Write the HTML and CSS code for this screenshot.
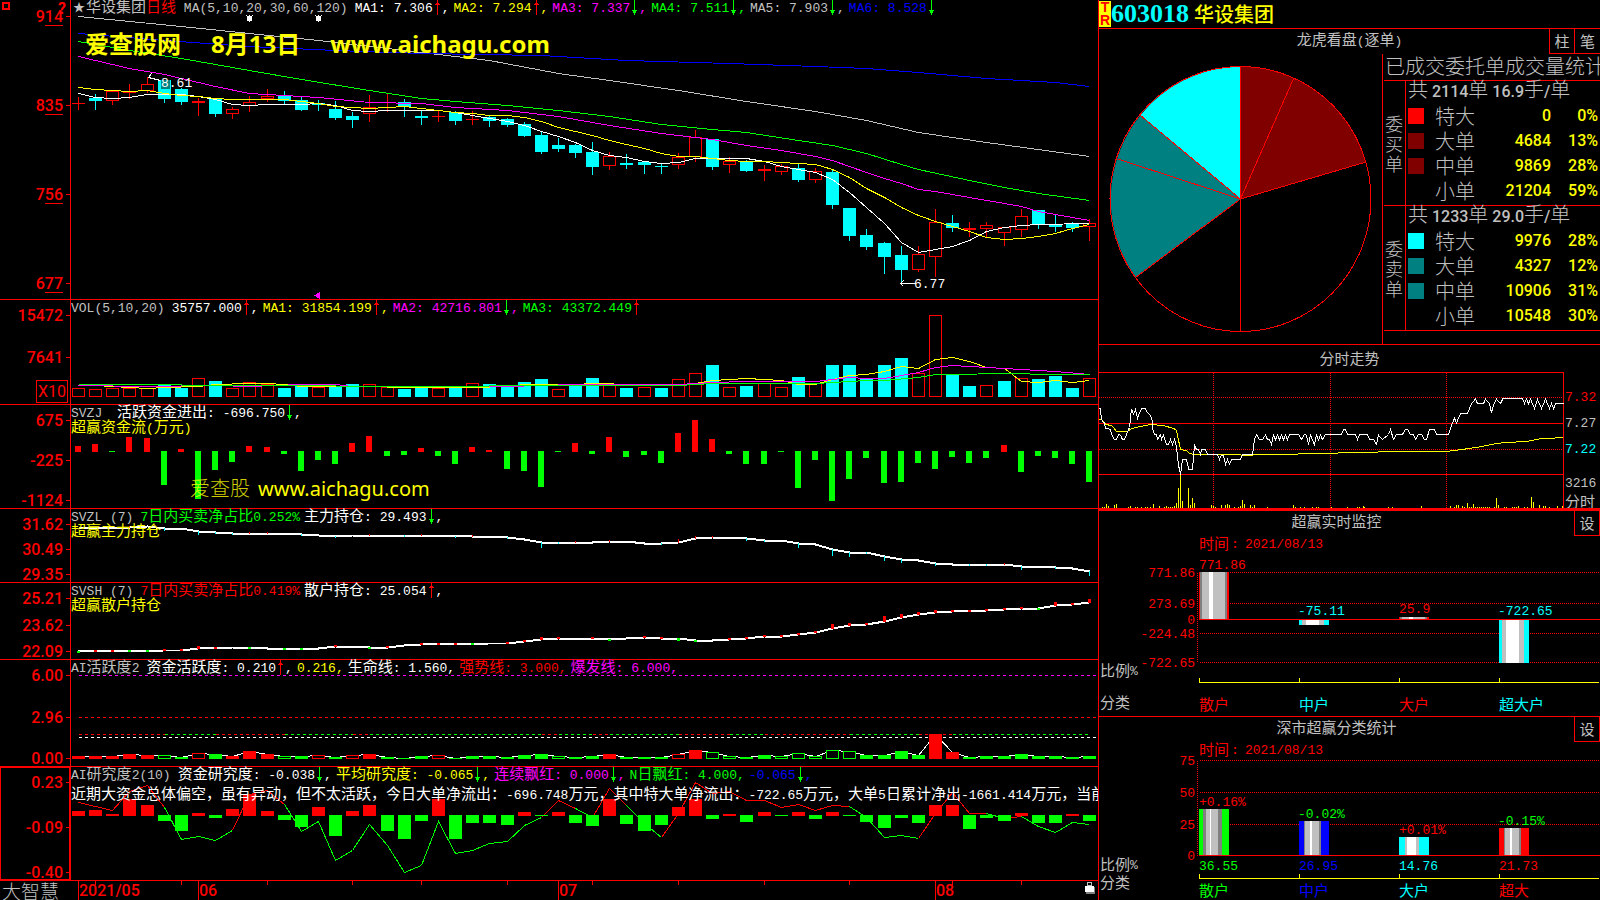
FILE: index.html
```html
<!DOCTYPE html>
<html lang="zh-CN">
<head>
<meta charset="utf-8">
<title>603018 华设集团</title>
<link rel="stylesheet" href="styles.css">
</head>
<body>

<svg class="defs" aria-hidden="true">
  <symbol id="up" viewBox="0 0 7 15"><path d="M3 0h1v15h-1zM2 3h3v1h-3zM1 4h5v1h-5z" fill="#f00"/></symbol>
  <symbol id="down" viewBox="0 0 7 15"><path d="M3 0h1v15h-1zM1 10h5v1h-5zM2 11h3v2h-3z" fill="#0f0"/></symbol>
</svg>

<main class="charts">

  <section class="panel">
    <div class="axis price">
      <svg class="pinmark" width="8" height="8"><path d="M1 1h6v6h-6z" fill="none" stroke="#f00" stroke-width="2"/></svg>
      <b class="ghost">?</b>
      <span>9<u>14</u></span><span>8<u>35</u></span><span>7<u>56</u></span><span>6<u>77</u></span>
    </div>
    <div class="plot">
      <svg class="draw" id="price"></svg>
      <div class="legend silver">
        <span class="name"><span class="zh star">★</span><span class="zh">华设集团</span><span class="zh red">日线</span> MA(5,10,20,30,60,120)</span>
        <span class="white">MA1: 7.306<svg class="arrow"><use href="#up"/></svg>,</span>
        <span class="yellow">MA2: 7.294<svg class="arrow"><use href="#up"/></svg>,</span>
        <span class="magenta">MA3: 7.337<svg class="arrow"><use href="#down"/></svg>,</span>
        <span class="green">MA4: 7.511<svg class="arrow"><use href="#down"/></svg>,</span>
        <span class="silver">MA5: 7.903<svg class="arrow"><use href="#down"/></svg>,</span>
        <span class="blue">MA6: 8.528<svg class="arrow"><use href="#down"/></svg></span>
      </div>
      <div class="watermark big"><span>爱查股网</span><span>8月13日</span><span>www.aichagu.com</span></div>
    </div>
  </section>

  <section class="panel">
    <div class="axis"><span>15472</span><span>7641</span><span class="times">X10</span></div>
    <div class="plot">
      <svg class="draw" id="vol"></svg>
      <div class="legend silver">
        <span class="name">VOL(5,10,20)</span>
        <span class="white">35757.000<svg class="arrow"><use href="#up"/></svg>,</span>
        <span class="yellow">MA1: 31854.199<svg class="arrow"><use href="#up"/></svg>,</span>
        <span class="magenta">MA2: 42716.801<svg class="arrow"><use href="#down"/></svg>,</span>
        <span class="green">MA3: 43372.449<svg class="arrow"><use href="#up"/></svg></span>
      </div>
    </div>
  </section>

  <section class="panel">
    <div class="axis"><span>675</span><span>-225</span><span>-1124</span></div>
    <div class="plot">
      <svg class="draw" id="flow"></svg>
      <div class="legend silver">
        <span class="name">SVZJ </span>
        <span class="white"><span class="zh">活跃资金进出</span>: -696.750<svg class="arrow"><use href="#down"/></svg>,</span>
      </div>
      <div class="sub"><span class="zh">超赢资金流</span>(<span class="zh">万元</span>)</div>
      <div class="watermark small"><span class="thin">爱查股</span><span>www.aichagu.com</span></div>
    </div>
  </section>

  <section class="panel">
    <div class="axis"><span>31.62</span><span>30.49</span><span>29.35</span></div>
    <div class="plot">
      <svg class="draw" id="main-hold"></svg>
      <div class="legend silver">
        <span class="name">SVZL (7)</span>
        <span class="green">7<span class="zh">日内买卖净占比</span>0.252%</span>
        <span class="white"><span class="zh">主力持仓</span>: 29.493<svg class="arrow"><use href="#down"/></svg>,</span>
      </div>
      <div class="sub"><span class="zh">超赢主力持仓</span></div>
    </div>
  </section>

  <section class="panel">
    <div class="axis"><span>25.21</span><span>23.62</span><span>22.09</span></div>
    <div class="plot">
      <svg class="draw" id="retail-hold"></svg>
      <div class="legend silver">
        <span class="name">SVSH (7)</span>
        <span class="red">7<span class="zh">日内买卖净占比</span>0.419%</span>
        <span class="white"><span class="zh">散户持仓</span>: 25.054<svg class="arrow"><use href="#up"/></svg>,</span>
      </div>
      <div class="sub"><span class="zh">超赢散户持仓</span></div>
    </div>
  </section>

  <section class="panel">
    <div class="axis"><span>6.00</span><span>2.96</span><span>0.00</span></div>
    <div class="plot">
      <svg class="draw" id="active"></svg>
      <div class="legend silver">
        <span class="name">AI<span class="zh">活跃度</span>2</span>
        <span class="white"><span class="zh">资金活跃度</span>: 0.210<svg class="arrow"><use href="#up"/></svg>,</span>
        <span class="yellow">0.216,</span>
        <span class="white"><span class="zh">生命线</span>: 1.560,</span>
        <span class="red"><span class="zh">强势线</span>: 3.000,</span>
        <span class="magenta"><span class="zh">爆发线</span>: 6.000,</span>
      </div>
    </div>
  </section>

  <section class="panel">
    <div class="axis current"><span>0.23</span><span>-0.09</span><span>-0.40</span></div>
    <div class="plot">
      <svg class="draw" id="study"></svg>
      <div class="legend silver">
        <span class="name">AI<span class="zh">研究度</span>2(10)</span>
        <span class="white"><span class="zh">资金研究度</span>: -0.038<svg class="arrow"><use href="#down"/></svg>,</span>
        <span class="yellow"><span class="zh">平均研究度</span>: -0.065<svg class="arrow"><use href="#down"/></svg>,</span>
        <span class="magenta"><span class="zh">连续飘红</span>: 0.000<svg class="arrow"><use href="#down"/></svg>,</span>
        <span class="green">N<span class="zh">日飘红</span>: 4.000,</span>
        <span class="blue">-0.065<svg class="arrow"><use href="#down"/></svg>,</span>
      </div>
      <p class="news"><span class="zh">近期大资金总体偏空，虽有异动，但不太活跃，今日大单净流出：</span>-696.748<span class="zh">万元，其中特大单净流出：</span>-722.65<span class="zh">万元，大单</span>5<span class="zh">日累计净出</span>-1661.414<span class="zh">万元，当前</span></p>
    </div>
  </section>

  <footer class="dates">
    <div class="brand">大智慧</div>
    <div class="plot"><svg class="draw" id="dates"></svg></div>
  </footer>
</main>

<aside class="side">

  <header class="stock">
    <span class="tr"><b>T</b><b>R</b></span>
    <span class="code">603018</span>
    <h1>华设集团</h1>
  </header>

  <section class="orders">
    <div class="bar">
      <h2><span class="zh">龙虎看盘</span>(<span class="zh">逐单</span>)</h2>
      <div class="tabs"><button type="button">柱</button><button type="button">笔</button></div>
    </div>
    <div class="split">
      <svg class="pie" viewBox="0 0 283 290">
        <path fill="#0ff" d="M141.500 145V12.500A130.500 132.500 0 0 0 41.300 61.300z"/>
        <path fill="#008080" d="M141.500 145L41.300 61.300A130.500 132.500 0 0 0 36.700 223.300z"/>
        <path fill="#800000" d="M141.500 145V12.500A130.500 132.500 0 0 1 267 108z"/>
        <path class="edge" d="M141.500 12.500V277.500M141.500 145L194.700 24.300M141.500 145L267 108M141.500 145L36.700 223.300M141.500 145L18.700 105M141.500 145L41.300 61.300"/>
        <ellipse class="edge" cx="141.500" cy="145" rx="130.500" ry="132.500"/>
      </svg>
      <div class="stats">
        <h3>已成交委托单成交量统计</h3>
        <div class="group">
          <div class="kind">委买单</div>
          <table>
            <caption><i>共</i> 2114<i>单</i> 16.9<i>手</i>/<i>单</i></caption>
            <tr><td><span class="key red-key"></span></td><th>特大</th><td>0</td><td>0%</td></tr>
            <tr><td><span class="key maroon-key"></span></td><th>大单</th><td>4684</td><td>13%</td></tr>
            <tr><td><span class="key maroon-key"></span></td><th>中单</th><td>9869</td><td>28%</td></tr>
            <tr><td></td><th>小单</th><td>21204</td><td>59%</td></tr>
          </table>
        </div>
        <div class="group">
          <div class="kind">委卖单</div>
          <table>
            <caption><i>共</i> 1233<i>单</i> 29.0<i>手</i>/<i>单</i></caption>
            <tr><td><span class="key cyan-key"></span></td><th>特大</th><td>9976</td><td>28%</td></tr>
            <tr><td><span class="key teal-key"></span></td><th>大单</th><td>4327</td><td>12%</td></tr>
            <tr><td><span class="key teal-key"></span></td><th>中单</th><td>10906</td><td>31%</td></tr>
            <tr><td></td><th>小单</th><td>10548</td><td>30%</td></tr>
          </table>
        </div>
      </div>
    </div>
  </section>

  <section class="trend">
    <h2 class="zh">分时走势</h2>
    <div class="trend-row">
      <div class="trend-plot"><svg class="draw" id="trend"></svg></div>
      <div class="scale">
        <span class="red">7.32</span><span>7.27</span><span class="cyan">7.22</span><span class="low">3216</span><span class="zh">分时</span>
      </div>
    </div>
  </section>

  <section class="money">
    <div class="bar">
      <h2><span class="zh">超赢实时监控</span></h2>
      <button type="button">设</button>
    </div>
    <div class="fill"><svg class="draw" id="monitor"></svg></div>
  </section>

  <section class="money">
    <div class="bar">
      <h2><span class="zh">深市超赢分类统计</span></h2>
      <button type="button">设</button>
    </div>
    <div class="fill"><svg class="draw" id="classes"></svg></div>
  </section>
</aside>

<script src="script.js"></script>
</body>
</html>
```

FILE: styles.css
```css
* { box-sizing: border-box; }
body { margin: 0; height: 100vh; min-height: 700px; display: grid; grid-template-columns: 1098fr 502fr;
  background: #000; color: #c0c0c0; overflow: hidden;
  font: 13px/16px "Liberation Mono", "Noto Sans CJK SC", monospace; }
h1, h2, h3, p { margin: 0; font-weight: normal; font-size: inherit; }
.defs { position: absolute; width: 0; height: 0; }

.zh { font-family: "Noto Sans CJK SC", sans-serif; font-size: 15px; }
.red { color: #f00; }
.white { color: #fff; }
.yellow { color: #ff0; }
.magenta { color: #f0f; }
.green { color: #0f0; }
.cyan { color: #0ff; }
.blue { color: #00f; }
.silver { color: #c0c0c0; }

/* left: stacked indicator panels */
.charts { display: grid; grid-template-rows: 300fr 105fr 104fr 74fr 77fr 107fr 114fr 19fr; min-width: 0; min-height: 0; }
.panel { display: grid; grid-template-columns: 71px 1fr; border-bottom: 1px solid #f00; min-height: 0; }
.axis { position: relative; display: flex; flex-direction: column; justify-content: space-between;
  padding: 7px 7px 0 0; border-right: 1px solid #f00; text-align: right; color: #f00;
  font: 500 16px/18px Roboto, sans-serif; }
.axis.price { padding: 8px 7px 8px 0; }
.axis span { position: relative; height: 16px; }
.axis span::after { content: ""; position: absolute; right: -7px; top: 8px; width: 4px; height: 1px; background: #f00; }
.axis u { display: inline-block; height: 18px; text-decoration: none; border-bottom: 1px solid #f00; }
.axis .times { align-self: flex-end; height: 23px; line-height: 21px; margin: -10px -5px 1px 0; padding: 0 1px; border: 1px solid #f00; font-weight: 400; }
.axis .times::after { display: none; }
.axis.current { box-shadow: inset 1px 0 #f00, inset -1px 0 #f00, inset 0 1px #f00, inset 0 -1px #f00; }
.pinmark { position: absolute; left: 2px; top: 2px; }
.ghost { position: absolute; right: 4px; top: 0; }

.plot, .fill, .trend-plot { position: relative; overflow-x: clip; min-width: 0; min-height: 0; }
.draw { position: absolute; left: 0; top: 0; width: 100%; height: 100%; shape-rendering: crispEdges; }
.legend { position: relative; display: flex; gap: 4px; height: 16px; line-height: 18px; white-space: pre; }
.legend .name { margin-right: 3px; }
.star { font-size: 12px; margin: 0 1px 0 2px; }
.legend .zh, .sub .zh, .news .zh, .bar .zh { line-height: 1px; }
.arrow { width: 9px; height: 15px; vertical-align: top; }
.sub { position: relative; height: 15px; line-height: 15px; color: #ff0; }
.news { position: relative; margin-top: 3px; color: #fff; line-height: 20px; white-space: nowrap; }

.watermark { position: absolute; display: flex; color: #ff0; white-space: nowrap;
  font-family: "Noto Sans", "Noto Sans CJK SC", sans-serif; }
.watermark.big { left: 14px; top: 28px; gap: 30px; font-size: 24px; line-height: 32px; font-weight: 700; }
.watermark.small { left: 119px; top: 70px; gap: 8px; font-size: 20px; line-height: 28px; }
.thin { font-weight: 300; opacity: .8; }

.dates { display: grid; grid-template-columns: 71px 1fr; min-height: 0; }
.brand { padding-left: 2px; font: 300 19px/19px "Noto Sans CJK SC", sans-serif; }

svg text { font-family: "Liberation Mono", monospace; font-size: 13px; }
svg text.cn { font-family: "Noto Sans CJK SC", sans-serif; font-size: 15px; }
svg text.date { font-family: Roboto, sans-serif; font-size: 16px; font-weight: 500; }

/* right: quote column */
.side { display: grid; grid-template-rows: 29fr 316fr 166fr 206fr 183fr; border-left: 1px solid #f00; min-width: 0; min-height: 0; }
.side > * { min-height: 0; min-width: 0; overflow: hidden; border-bottom: 1px solid #f00; }
.side > :last-child { border-bottom: 0; }
.stock { display: flex; align-items: center; }
.tr { display: flex; flex-direction: column; width: 12px; height: 26px; background: #ff0; color: #f00;
  font: bold 14px/13px "Liberation Sans", sans-serif; text-align: center; }
.code { color: #0ff; font: bold 26px/28px "Liberation Serif", serif; }
.stock h1 { margin-left: 5px; color: #ff0; font: 500 20px/28px "Noto Sans CJK SC", sans-serif; }

button { width: 26px; height: 25px; padding: 0; border: 1px solid #f00; border-top: 0; background: #000; color: #c0c0c0;
  font: 15px/20px "Noto Sans CJK SC", sans-serif; }
.bar { position: relative; flex: none; display: flex; height: 25px; }
.bar h2 { flex: 1; text-align: center; line-height: 25px; }
.tabs { position: absolute; right: 0; top: 0; display: flex; }
.tabs button + button { margin-left: -1px; border-right: 0; }

.orders { display: flex; flex-direction: column; }
.split { flex: 1; display: grid; grid-template-columns: 283fr 218fr; min-height: 0; }
.pie { width: 100%; height: 100%; }
.edge { fill: none; stroke: #f00; shape-rendering: crispEdges; }
.stats { border-left: 1px solid #f00; overflow: hidden; }
.stats h3 { height: 26px; padding-left: 2px; font: 300 20px/24px "Noto Sans CJK SC", sans-serif; white-space: nowrap; }
.group { display: grid; grid-template-columns: 22px 1fr; height: 125px; margin-left: 1px; border-top: 1px solid #f00; }
.group:last-child { height: 126px; border-bottom: 1px solid #f00; }
.kind { display: flex; align-items: center; padding: 0 1px; font: 300 18px/20px "Noto Sans CJK SC", sans-serif; border-right: 1px solid #f00; }
table { align-self: start; border-collapse: collapse; width: 100%; font: 500 16px/22px Roboto, "Noto Sans CJK SC", sans-serif; }
caption { height: 22px; padding-left: 2px; text-align: left; white-space: nowrap; }
caption i { font: 300 20px/1px "Noto Sans CJK SC", sans-serif; }
tr { height: 25px; }
td, th { padding: 0; }
th { width: 44px; text-align: left; font: 300 20px/22px "Noto Sans CJK SC", sans-serif; }
td { text-align: right; color: #ff0; }
td:first-child { width: 29px; text-align: left; }
td:last-child { width: 49px; padding-right: 2px; }
.key { display: block; width: 16px; height: 16px; margin-left: 2px; }
.red-key { background: #f00; }
.maroon-key { background: #800000; }
.cyan-key { background: #0ff; }
.teal-key { background: #008080; }

.side > .trend { display: flex; flex-direction: column; border-bottom-width: 3px; }
.trend h2 { flex: none; height: 27px; line-height: 25px; text-align: center; }
.trend-row { flex: 1; display: grid; grid-template-columns: 465fr 36fr; grid-template-rows: 100%; min-height: 0; }
.scale { display: flex; flex-direction: column; padding: 18px 0 0 1px; line-height: 16px; }
.scale span { flex: none; height: 26px; }
.scale .low { height: 17px; margin-top: 8px; }
.scale .zh { height: 16px; }

.money { display: flex; flex-direction: column; }
.fill { flex: 1; }
```

FILE: script.js
```js
var RED = '#f00', GREEN = '#0f0', CYAN = '#0ff', YELLOW = '#ff0', WHITE = '#fff',
    MAGENTA = '#f0f', BLUE = '#00f', SILVER = '#c0c0c0', GRAY = '#808080';
var svg, sx, sy;

// every chart is written in its own base units and scaled to the box it gets
function begin(id, w, h) {
  svg = document.getElementById(id);
  svg.textContent = '';
  var box = svg.getBoundingClientRect();
  sx = box.width / w;
  sy = box.height / h;
}

function add(tag, attrs) {
  var el = document.createElementNS('http://www.w3.org/2000/svg', tag);
  for (var k in attrs) el.setAttribute(k, attrs[k]);
  svg.appendChild(el);
  return el;
}

function box(x, y, w, h, color, hollow) {
  if (hollow && h > 1)
    add('rect', { x: x * sx + 0.5, y: y * sy + 0.5, width: w * sx - 1, height: h * sy - 1, fill: 'none', stroke: color });
  else
    add('rect', { x: x * sx, y: y * sy, width: Math.max(w * sx, 1), height: Math.max(h * sy, 1), fill: color });
}

function line(pts, color, width, dash) {
  var s = pts.map(function (p) { return ((p[0] + 0.5) * sx) + ',' + ((p[1] + 0.5) * sy); }).join(' ');
  var el = add('polyline', { points: s, fill: 'none', stroke: color, 'stroke-width': width || 1 });
  if (dash) el.setAttribute('stroke-dasharray', dash);
}

function label(x, y, str, color, cls, anchor) {
  var el = add('text', { x: x * sx, y: y * sy, fill: color });
  if (cls) el.setAttribute('class', cls);
  if (anchor) el.setAttribute('text-anchor', anchor);
  el.textContent = str;
}

function X(i) { return Math.round(7 + i * 17.14); }

// "0:93 1:97" -> points at bar centres
function series(str) {
  return str.split(' ').map(function (p) {
    var a = p.split(':');
    return [X(+a[0]), +a[1]];
  });
}

function pairs(str) {
  return str.split(' ').map(function (p) { return p.split(',').map(Number); });
}

// r = up day (hollow), f = up day, tiny body, c = down day; top, bottom, high, low
var candles = ('f,103,104,97,110 c,98,101,94,110 r,91,101,91,105 f,92,93,84,99 r,84,91,77,93 c,80,99,80,103 c,89,102,88,105 ' +
  'f,101,103,98,116 c,98,114,98,117 r,109,114,107,119 r,102,106,96,112 r,96,99,89,102 c,96,101,91,104 c,100,110,97,111 ' +
  'c,103,105,100,111 c,109,118,101,120 c,116,120,112,128 r,107,114,95,122 f,102,103,93,112 c,102,107,99,117 c,116,118,111,125 ' +
  'f,116,117,110,122 c,112,121,111,125 f,119,120,111,125 c,117,121,115,127 c,119,125,118,127 c,124,136,122,136 c,135,152,131,154 ' +
  'c,145,149,138,152 c,145,153,144,158 c,152,167,142,175 r,156,166,152,170 c,163,165,154,169 c,162,165,161,174 c,166,167,163,174 ' +
  'r,157,165,153,169 r,137,157,130,162 c,139,167,139,170 r,161,165,157,173 c,162,171,160,172 f,169,171,165,181 r,166,172,164,175 ' +
  'c,168,180,163,182 r,171,180,168,183 c,172,205,170,209 c,208,236,208,241 c,235,247,229,250 c,243,257,242,274 c,255,270,246,283 ' +
  'r,254,270,246,272 r,222,257,209,277 c,223,228,215,232 f,228,230,222,237 r,225,229,222,237 r,227,233,227,246 r,216,230,209,237 ' +
  'c,210,224,210,229 c,225,227,215,232 c,223,228,222,232 r,223,227,219,241').split(' ');

var averages = [
  [SILVER, '0:16 6:26 10:33 14:40 19:50 24:60 28:73 31:80 35:90 39:101 43:111 46:120 49:132 53:142 59:156'],
  [BLUE, '0:33 5:40 10:46 15:50 20:53 27:55 32:60 38:63 43:66 46:68 49:72 53:78 57:82 59:86'],
  [GREEN, '0:41 3:50 6:58 8:64 10:70 13:79 17:90 20:98 22:101 25:105 28:110 31:116 34:124 37:129 39:132 42:140 44:145 46:153 48:164 49:169 52:180 54:187 56:193 59:200'],
  [MAGENTA, '0:56 3:68 5:74 8:86 10:93 12:95 14:97 17:102 20:103 22:107 25:110 28:116 31:125 34:133 36:137 37:139 39:145 41:150 43:156 44:160 45:166 46:172 47:178 48:183 49:189 50:191 52:197 54:203 55:206 56:211 57:214 59:220'],
  [WHITE, '0:93 1:97 2:98 3:97 4:94 5:94 6:94 7:96 8:99 9:104 10:105 11:104 13:104 14:103 15:105 16:110 17:111 18:110 21:110 22:112 23:115 24:118 25:121 26:125 27:131 28:136 29:142 30:150 31:155 32:157 33:161 34:163 35:162 36:158 39:158 40:161 41:166 42:169 43:172 44:179 45:192 46:207 47:223 48:242 49:252 50:249 51:246 52:240 53:231 54:227 55:225 56:224 59:223'],
  [YELLOW, '0:87 1:89 2:90 3:91 4:90 5:93 6:95 7:96 8:98 9:99 12:99 13:101 14:103 15:106 16:107 17:108 18:107 19:106 20:108 21:110 22:112 23:113 24:115 25:115 26:117 27:121 28:127 29:131 30:135 31:140 32:144 33:148 34:153 35:156 36:156 37:158 38:160 39:161 40:161 41:162 42:163 43:164 44:169 45:177 46:188 47:197 48:207 49:215 50:221 51:226 52:231 53:237 54:239 55:238 56:236 57:233 58:228 59:224']
];

function drawPrice() {
  begin('price', 1027, 299);
  candles.forEach(function (s, i) {
    var c = s.split(','), x = X(i), top = +c[1], bot = +c[2];
    var color = c[0] == 'c' ? CYAN : RED;
    box(x, +c[3], 1, top - c[3], color);
    box(x, bot, 1, c[4] - bot, color);
    box(x - 6, top, 13, bot - top, color, c[0] == 'r');
  });
  averages.forEach(function (a) { line(series(a[1]), a[0]); });

  [178, 247].forEach(function (x) {
    box(x - 2, 16, 5, 5, WHITE);
    line([[x - 3, 15], [x + 3, 21]], WHITE);
    line([[x + 3, 15], [x - 3, 21]], WHITE);
    box(x, 15, 1, 7, WHITE);
  });
  add('path', { d: 'M' + 243 * sx + ' ' + 295.5 * sy + 'l6 -4v8z', fill: MAGENTA });

  line([[80, 73], [77, 77], [89, 80]], WHITE);
  box(90, 80, 9, 9, '#008080');
  label(90, 87, '8.61', WHITE);
  line([[844, 283], [829, 283], [832, 280]], WHITE);
  line([[829, 283], [832, 286]], WHITE);
  label(843, 288, '6.77', WHITE);
}

var volume = [9, 8, 9, 9, 9, -12, -9, 19, -16, 9, 15, 13, -9, -11, 10, -10, -13, 13, 10, -8, -9, 9, -10, 14, -13, -10, -15, -18, 8, -11,
  -19, 12, -9, 10, -9, 18, 24, -32, 10, -11, 14, 10, -20, 14, -32, -32, -18, -32, -39, 24, 82, -23, -11, 12, -16, 19, -18, -21, -9, 19];

function drawVolume() {
  begin('vol', 1027, 104);
  volume.forEach(function (v, i) {
    var h = Math.abs(v);
    box(X(i) - 6, 97 - h, 13, h, v > 0 ? RED : CYAN, v > 0);
  });
  line(series('0:85 1:85 3:87 4:88 5:87 7:86 8:84 10:83 11:83 12:84 13:86 17:86 19:87 23:87 25:86 26:84 28:84 31:83 32:85 35:84 36:83 37:80 39:78 41:80 42:84 43:84 44:79 45:75 46:74 47:71 48:66 49:68 50:59 51:57 52:61 53:67 54:68 55:81 56:82 57:80 58:82 59:80'), YELLOW);
  line(series('0:85 4:86 8:85 10:86 13:84 15:84 16:86 25:86 29:84 35:84 37:82 39:81 43:81 45:77 46:78 47:78 48:75 49:72 50:67 51:65 54:68 57:71 59:74'), MAGENTA);
  line(series('0:84 5:84 7:85 10:85 20:86 28:85 35:85 37:83 43:83 45:81 46:80 47:80 49:77 50:74 55:73 56:74 59:74'), GREEN);
}

var flow = [6, 8, -1, 15, 14, -34, 3, -48, -19, -11, 6, 5, -3, -20, -9, -13, 9, 16, -5, -4, 4, -5, -13, 5, 2, -18, -20, -36, -1, 9,
  -3, 15, -6, -4, -12, 19, 32, 13, -3, -13, -13, -1, -37, -9, -50, -28, -7, -32, -31, -12, -18, -6, -12, -7, 7, -21, -5, -7, -13, -31];

function drawFlow() {
  begin('flow', 1027, 103);
  flow.forEach(function (v, i) {
    if (v > 0) box(X(i) - 3, 47 - v, 6, v, RED);
    else box(X(i) - 3, 46, 6, -v, GREEN);
  });
}

function ticks(pts, str, color, width) {
  series(str).forEach(function (t) {
    var y = 0;
    pts.forEach(function (p, n) {
      var q = pts[n + 1];
      if (q && t[0] >= p[0] && t[0] <= q[0]) y = p[1] + (q[1] - p[1]) * (t[0] - p[0]) / (q[0] - p[0]);
    });
    y = Math.round(y);
    if (t[1] > 0) box(t[0] - (width > 1 ? 1 : 0), y - t[1], width, t[1] + 1, color);
    else box(t[0] - (width > 1 ? 1 : 0), y, width, 1 - t[1], color);
  });
}

function drawHoldings() {
  var p;
  begin('main-hold', 1027, 73);
  p = series('0:18 3:18 4:17 5:19 6:19 7:22 8:23 9:24 12:24 13:25 15:27 16:26 17:26 21:26 23:27 24:27 25:28 26:30 27:33 30:33 31:32 32:32 33:34 34:34 35:33 36:29 37:28 38:28 39:29 40:31 41:31 42:34 43:35 44:40 45:43 46:43 47:47 48:50 49:51 50:54 51:55 54:55 55:57 57:58 58:59 59:62');
  line(p, WHITE, 2);
  ticks(p, '5:-2 7:-3 8:-1 9:-1 13:-1 15:-1 19:-1 22:-1 25:-1 27:-5 28:-1 34:-1 39:-2 40:-1 42:-4 44:-6 45:-4 46:-1 47:-4 48:-3 50:-2 52:-1 53:-1 55:-3 57:-1 59:-4', CYAN, 1);
  ticks(p, '3:1 10:1 11:1 17:1 20:1 23:1 29:1 31:1 35:3 36:2 37:1 54:1', RED, 1);

  begin('retail-hold', 1027, 76);
  p = series('0:68 5:67 6:67 7:65 9:64 10:64 11:65 14:65 15:63 16:63 17:64 18:64 19:62 20:61 24:60 25:60 26:58 27:56 28:55 30:55 31:56 32:55 33:54 34:55 35:55 36:57 37:57 38:56 39:55 40:53 41:53 42:51 43:49 44:45 45:42 46:41 47:38 48:34 49:31 50:29 51:28 53:27 54:26 55:25 56:25 57:22 58:21 59:19');
  line(p, WHITE, 2);
  ticks(p, '1:1 2:1 5:1 6:1 7:2 8:1 15:1 18:1 20:1 21:1 22:1 25:1 26:1 27:2 28:1 30:1 33:1 34:1 38:1 39:1 40:1 41:1 42:1 43:1 44:4 45:2 46:1 47:5 48:3 49:2 50:2 51:1 52:1 53:1 54:1 55:1 57:3 58:1 59:3', RED, 3);
  ticks(p, '0:-1 3:-1 4:-1 10:-1 12:-1 13:-1 17:-1 23:-1 31:-1 35:-2 36:-1 56:-1', GREEN, 3);
}

// upper case = filled bar, lower case = hollow
var active = ('R3 R3 R3 R5 R4 g4 G2 r6 G5 R3 R8 R5 g3 G3 r4 G2 r4 R5 G2 G1 G3 r4 G1 G3 G3 G2 G4 G5 g3 G2 ' +
  'G3 R5 G2 G2 G2 r5 R9 g7 g3 G2 G4 g3 g6 g3 g9 g8 G4 G4 G8 G4 R25 R7 G2 G3 G3 G5 G3 G3 G2 G3').split(' ');

function split(str, pts, dash, y) {
  // "r5 g8": red up to bar 5, then green up to bar 8
  var from = 0;
  str.split(' ').forEach(function (s) {
    var to = +s.slice(1), color = s[0] == 'r' ? RED : GREEN;
    if (pts) line(pts.slice(from, to + 1), color);
    else line([[X(from), y], [X(to), y]], color, 1, dash);
    from = to;
  });
}

function drawActive() {
  begin('active', 1027, 106);
  line([[7, 15], [1025, 15]], MAGENTA, 1, '3 3');
  line([[7, 57], [1025, 57]], RED, 1, '3 3');
  split('r5 g8 r12 g16 r17 g27 r28 g30 r31 g35 r38 g40 r45 g49 r51 g59', null, '3 3', 74);
  line([[7, 77], [1025, 77]], WHITE, 1, '3 3');
  line(active.map(function (a, i) { return [X(i), 99 - a.slice(1)]; }), WHITE);
  active.forEach(function (a, i) {
    var h = +a.slice(1), k = a[0], hollow = k == 'r' || k == 'g';
    if (hollow) box(X(i) - 6, 99 - h, 13, h, '#000');
    box(X(i) - 6, 99 - h, 13, h, k.toLowerCase() == 'r' ? RED : GREEN, hollow);
  });
}

var study = [5, 6, 2, 17, 11, -6, -16, 3, -3, 7, 22, 5, -5, -12, 9, -21, 5, 11, -16, -24, -6, 17, -24, -8, -8, -10, 4, -1, 4, -8,
  -11, 17, -9, -16, -10, 9, 17, -4, 2, -7, 4, -1, 4, -4, 4, -1, -7, -13, -3, -8, 11, 11, -14, -3, -6, 3, -8, -8, 2, -6];
var studyLine = [35, 39, 43, 24, 18, 40, 72, 69, 73, 63, 27, 23, 37, 64, 54, 93, 83, 57, 78, 105, 98, 54, 86, 83, 76, 74, 58, 50, 33, 41,
  50, 21, 38, 56, 70, 46, 15, 26, 24, 33, 33, 40, 37, 43, 38, 39, 50, 70, 68, 71, 46, 25, 46, 46, 51, 49, 59, 65, 55, 57];

function drawStudy() {
  begin('study', 1027, 113);
  split('r5 g9 r12 g27 r29 g30 r32 g34 r45 g49 r53 g54 r55 g59', studyLine.map(function (y, i) { return [X(i), y]; }));
  study.forEach(function (v, i) {
    if (v > 0) box(X(i) - 6, 49 - v, 13, v, RED);
    else box(X(i) - 6, 48, 13, -v, GREEN);
  });
}

function drawDates() {
  begin('dates', 1027, 19);
  [[0, '2021/05'], [7, '06'], [28, '07'], [50, '08']].forEach(function (d) {
    box(X(d[0]), 0, 1, 19, RED);
    label(X(d[0]) + 1, 15, d[1], RED, 'date');
  });
  [1, 6, 11, 16, 20, 25, 30, 35, 40, 45, 51, 55].forEach(function (i) { box(X(i), 0, 1, 4, RED); });
  // padlock
  box(1015, 6, 9, 7, GRAY);
  box(1014, 5, 9, 6, WHITE);
  box(1016, 1, 5, 4, SILVER, true);
}

function drawTrend() {
  begin('trend', 1395, 408);
  var off = function (p) { return [p[0] - 27, p[1] - 96]; };
  box(0, 0, 1395, 3, RED);
  box(1392, 0, 3, 408, RED);
  [76, 232].forEach(function (y) { line([[0, y], [1392, y]], RED, 1, '1 1'); });
  [153, 306].forEach(function (y) { box(0, y, 1392, 3, RED); });
  [343, 694, 1042].forEach(function (x) { line([[x, 3], [x, 408]], RED, 1, '1 1'); });

  pairs('37,504 43,504 49,495 55,501 73,498 79,495 115,504 121,501 136,504 142,504 154,504 166,504 172,504 181,504 190,495 208,501 223,504 229,501 235,504 241,504 247,504 253,501 259,492 265,447 271,404 277,486 295,447 301,498 307,477 313,492 364,498 370,501 376,504 394,498 406,498 412,495 418,498 433,504 445,504 451,501 457,483 463,495 481,498 487,504 493,498 532,504 610,498 616,504 631,504 643,504 667,504 679,504 685,504 724,504 772,504 802,504 808,504 820,501 823,504 895,504 907,504 994,501 1081,501 1093,504 1099,498 1105,498 1117,501 1123,504 1132,492 1138,504 1144,504 1150,495 1156,504 1162,504 1168,504 1174,504 1180,504 1186,504 1192,504 1198,504 1213,504 1219,477 1225,498 1243,504 1249,504 1267,504 1273,504 1279,504 1285,501 1303,504 1312,504 1324,474 1330,489 1348,498 1360,501 1366,501 1378,504 1402,501 1418,501').forEach(function (p) {
    box(p[0] - 28, p[1] - 99, 3, 507 - p[1], YELLOW);
  });
  line(pairs('27,238 37,240 46,252 67,258 79,274 112,274 124,265 160,257 181,253 220,256 250,265 259,270 265,300 271,328 290,332 300,341 320,343 450,343 455,346 487,346 490,343 605,342 725,339 885,335 1075,333 1130,326 1175,319 1225,309 1315,303 1350,296 1420,292').map(off), YELLOW);
  line(pairs('27,205 31,205 31,218 37,245 43,247 46,265 61,267 64,282 73,298 79,298 85,283 91,285 97,298 103,298 112,275 118,262 124,206 130,222 136,208 142,235 148,218 154,206 166,206 172,218 181,225 187,245 187,265 193,283 199,283 202,298 211,283 214,298 220,285 229,313 235,313 241,298 247,313 253,298 259,320 265,375 271,403 277,358 289,358 292,372 296,388 307,388 313,315 319,328 325,328 331,343 334,328 346,328 352,343 382,343 388,358 394,345 400,345 406,373 412,358 418,372 424,358 451,358 457,343 487,343 493,298 499,283 508,298 517,298 526,285 532,298 538,298 544,313 550,285 556,298 562,285 568,298 574,285 580,298 586,285 592,298 598,283 625,283 634,298 643,283 649,285 655,313 661,285 667,300 673,313 679,285 685,300 691,285 697,298 706,283 754,283 760,269 766,269 772,283 796,283 802,298 808,283 832,283 838,298 850,298 859,312 865,285 877,298 895,283 901,268 910,298 919,283 937,283 946,268 952,268 961,283 970,283 976,298 985,283 994,283 1003,298 1009,298 1018,268 1033,268 1039,283 1075,283 1084,255 1093,235 1099,248 1111,220 1132,220 1144,190 1156,177 1162,190 1180,190 1186,177 1198,190 1204,218 1210,195 1219,177 1231,190 1238,176 1297,176 1303,190 1309,177 1315,190 1321,177 1333,205 1342,178 1354,205 1366,177 1378,205 1384,190 1390,205 1397,190 1420,190').map(off), WHITE);
}

// shaded column: list of [width, colour] from the left
function column(x, y, h, stripes) {
  stripes.forEach(function (s) {
    box(x, y, s[0], h, s[1]);
    x += s[0];
  });
}

function baseline(y) {
  box(100, y, 400, 1, YELLOW);
  [100, 200, 300, 400].forEach(function (x) { box(x, y - 4, 1, 4, YELLOW); });
}

function drawMonitor() {
  begin('monitor', 501, 180);
  label(100, 13, '时间', RED, 'cn');
  label(132, 12, ':', RED);
  label(146, 12, '2021/08/13', RED);
  [[36, '771.86'], [67, '273.69'], [97, '-224.48'], [126, '-722.65']].forEach(function (r) {
    line([[100, r[0]], [501, r[0]]], RED, 1, '1 1');
    label(96, r[0] + 5, r[1], RED, '', 'end');
  });
  line([[98, 36], [98, 126]], RED, 1, '1 1');
  label(96, 88, '0', RED, '', 'end');

  column(100, 36, 47, [[1, RED], [2, GRAY], [7, SILVER], [4, WHITE], [12, SILVER], [2, GRAY], [2, RED]]);
  column(200, 84, 5, [[3, CYAN], [4, SILVER], [13, WHITE], [5, SILVER], [5, CYAN]]);
  column(300, 81, 2, [[1, RED], [2, GRAY], [7, SILVER], [4, WHITE], [12, SILVER], [2, GRAY], [2, RED]]);
  column(400, 84, 43, [[3, CYAN], [4, SILVER], [13, WHITE], [5, SILVER], [5, CYAN]]);
  box(100, 83, 401, 1, RED);
  label(100, 33, '771.86', RED);
  label(199, 79, '-75.11', CYAN);
  label(300, 77, '25.9', RED);
  label(399, 79, '-722.65', CYAN);

  baseline(146);
  label(1, 140, '比例', SILVER, 'cn');
  label(31, 139, '%', SILVER);
  label(1, 172, '分类', SILVER, 'cn');
  label(100, 174, '散户', RED, 'cn');
  label(200, 174, '中户', CYAN, 'cn');
  label(300, 174, '大户', RED, 'cn');
  label(400, 174, '超大户', CYAN, 'cn');
}

function drawClasses() {
  begin('classes', 501, 158);
  label(100, 13, '时间', RED, 'cn');
  label(132, 12, ':', RED);
  label(146, 12, '2021/08/13', RED);
  [[18, '75'], [50, '50'], [82, '25']].forEach(function (r) {
    line([[100, r[0]], [501, r[0]]], RED, 1, '1 1');
    label(96, r[0] + 5, r[1], RED, '', 'end');
  });
  line([[98, 18], [98, 113]], RED, 1, '1 1');
  label(96, 118, '0', RED, '', 'end');

  column(100, 67, 46, [[4, GREEN], [3, GRAY], [4, SILVER], [1, WHITE], [7, SILVER], [4, GRAY], [7, GREEN]]);
  column(200, 79, 34, [[5, BLUE], [1, GRAY], [5, SILVER], [2, WHITE], [7, SILVER], [2, GRAY], [8, BLUE]]);
  column(300, 95, 18, [[6, CYAN], [2, SILVER], [9, WHITE], [3, SILVER], [10, CYAN]]);
  column(400, 86, 27, [[5, RED], [1, GRAY], [5, SILVER], [2, WHITE], [7, SILVER], [2, GRAY], [8, RED]]);
  box(100, 113, 401, 1, RED);
  label(100, 64, '+0.16%', RED);
  label(199, 76, '-0.02%', GREEN);
  label(300, 92, '+0.01%', RED);
  label(399, 83, '-0.15%', GREEN);

  label(100, 128, '36.55', GREEN);
  label(200, 128, '26.95', BLUE);
  label(300, 128, '14.76', CYAN);
  label(400, 128, '21.73', RED);
  baseline(136);
  label(1, 128, '比例', SILVER, 'cn');
  label(31, 127, '%', SILVER);
  label(1, 146, '分类', SILVER, 'cn');
  label(100, 154, '散户', GREEN, 'cn');
  label(200, 154, '中户', BLUE, 'cn');
  label(300, 154, '大户', CYAN, 'cn');
  label(400, 154, '超大', RED, 'cn');
}

function drawAll() {
  drawPrice();
  drawVolume();
  drawFlow();
  drawHoldings();
  drawActive();
  drawStudy();
  drawDates();
  drawTrend();
  drawMonitor();
  drawClasses();
}

drawAll();
window.addEventListener('resize', drawAll);
```
